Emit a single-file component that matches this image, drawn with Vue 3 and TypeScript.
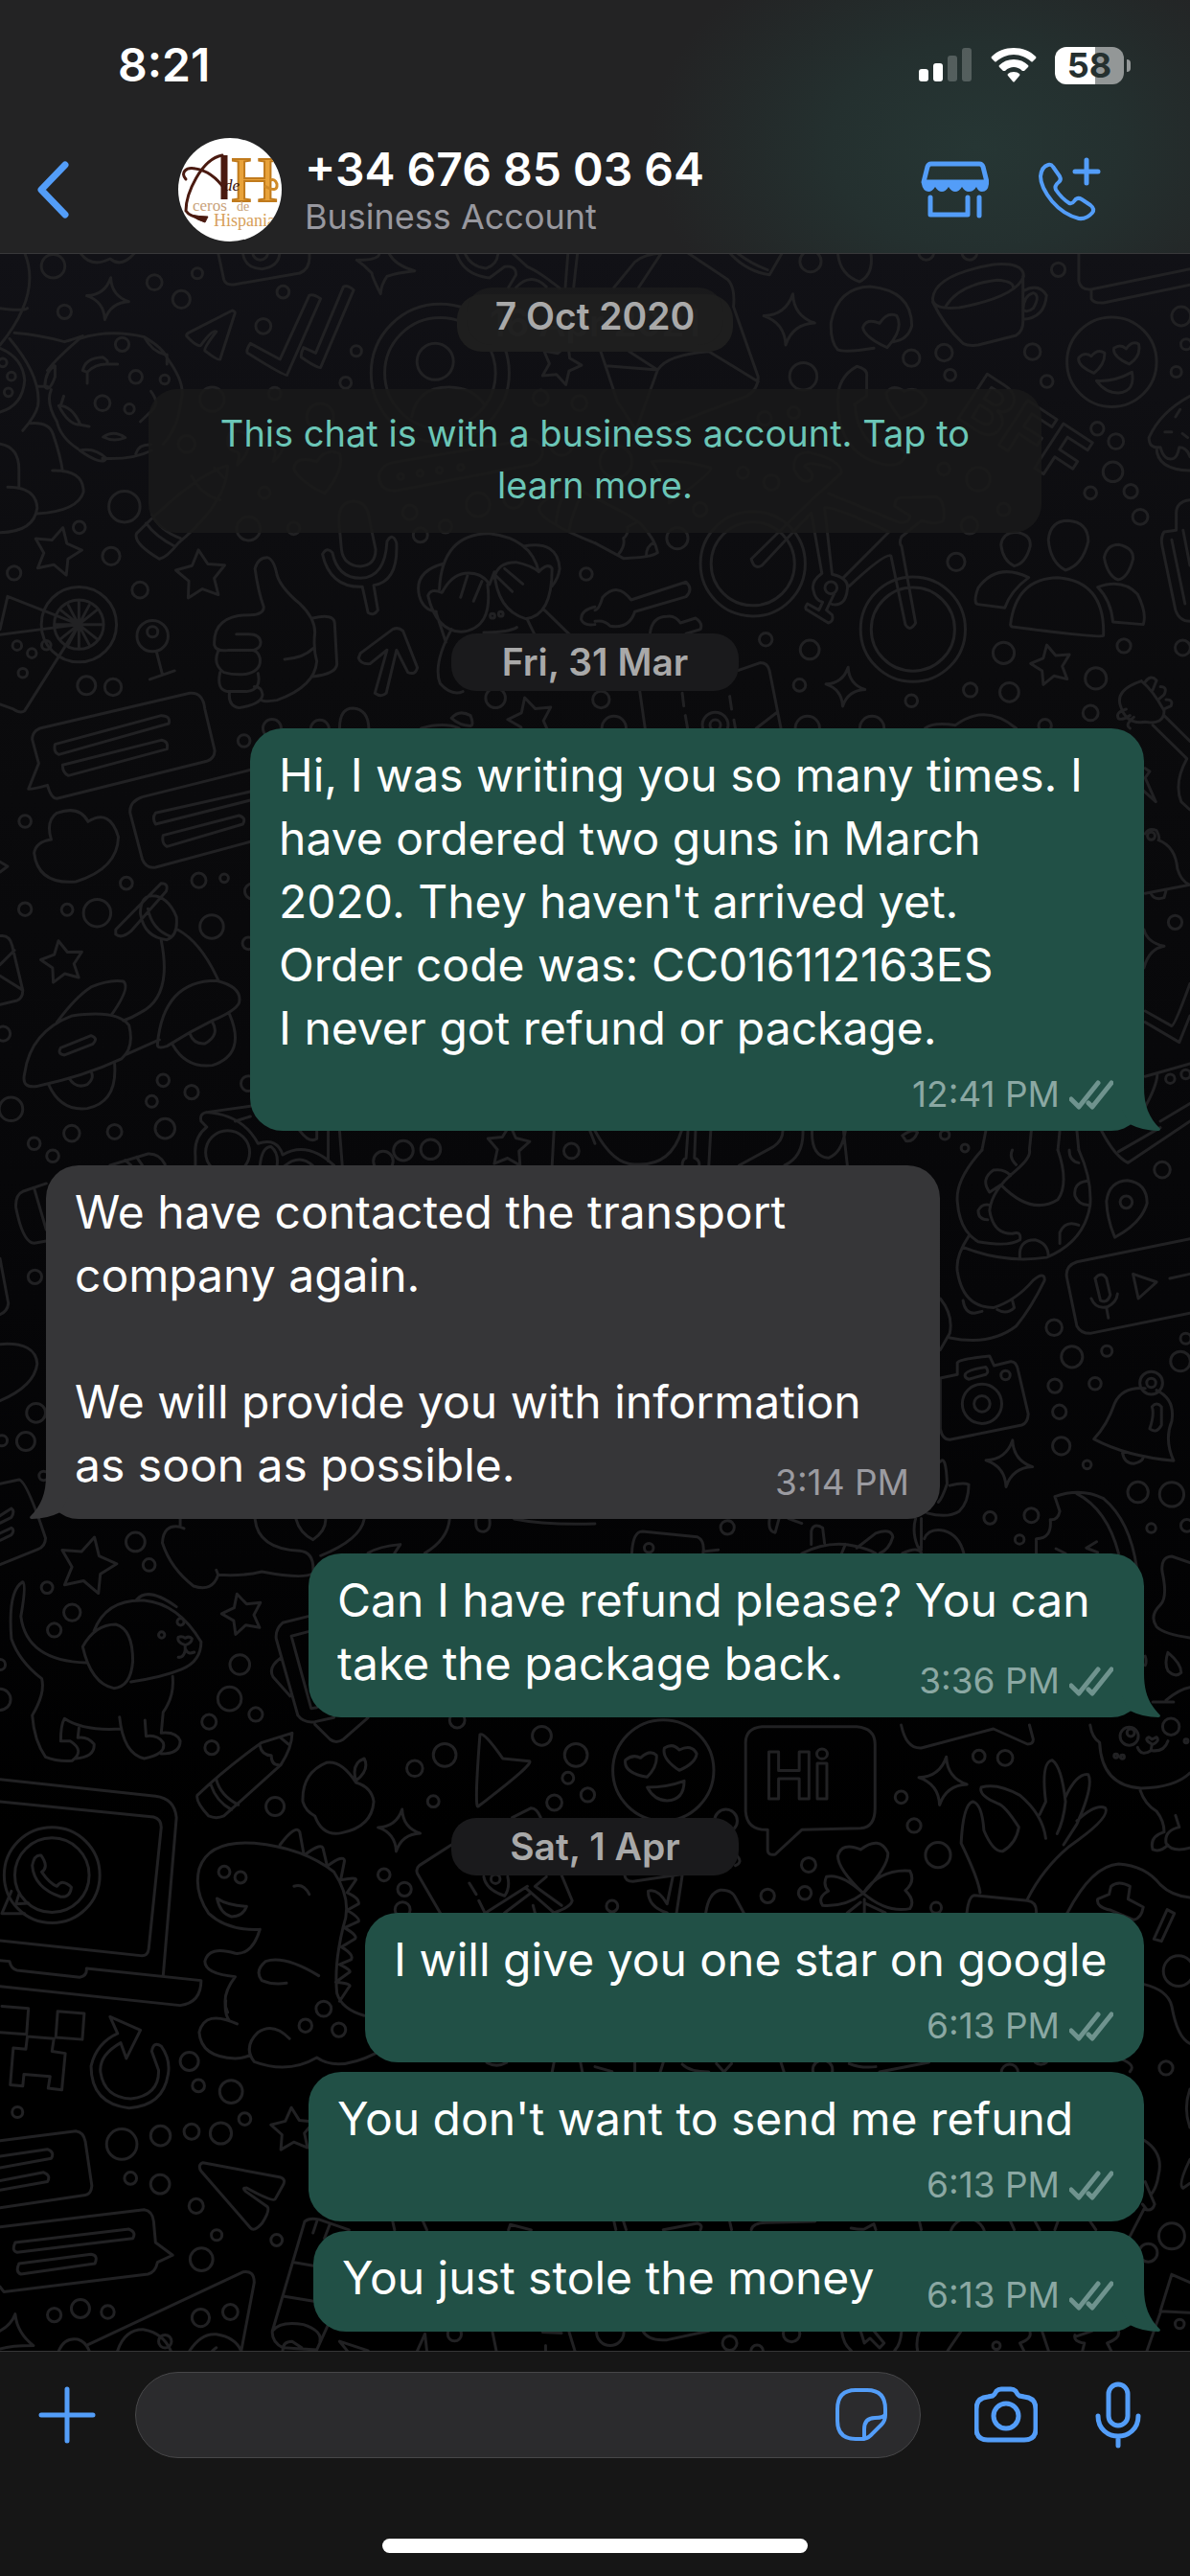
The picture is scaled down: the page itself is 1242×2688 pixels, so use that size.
<script setup lang="ts">
interface Message {
  text: string
  time: string
  mine: boolean
  width: number
  tail?: boolean
  stacked?: boolean
}

interface Section {
  day: string
  messages: Message[]
}

const sections: Section[] = [
  {
    day: 'Fri, 31 Mar',
    messages: [
      {
        text: "Hi, I was writing you so many times. I have ordered two guns in March\n2020. They haven't arrived yet.\nOrder code was: CC016112163ES\nI never got refund or package.",
        time: '12:41 PM', mine: true, width: 933, tail: true, stacked: true,
      },
      {
        text: 'We have contacted the transport company again.\n\nWe will provide you with information as soon as possible.',
        time: '3:14 PM', mine: false, width: 933, tail: true,
      },
      {
        text: 'Can I have refund please? You can take the package back.',
        time: '3:36 PM', mine: true, width: 872, tail: true,
      },
    ],
  },
  {
    day: 'Sat, 1 Apr',
    messages: [
      { text: 'I will give you one star on google', time: '6:13 PM', mine: true, width: 813, stacked: true },
      { text: "You don't want to send me refund", time: '6:13 PM', mine: true, width: 872, stacked: true },
      { text: 'You just stole the money', time: '6:13 PM', mine: true, width: 867, tail: true },
    ],
  },
]

/* Wallpaper doodles, grouped in patches that each have their own origin and scale. */
interface Patch {
  at: [number, number]
  sx: number
  sy: number
  dots: number[][]
  stars?: number[][]
  sparkles?: number[][]
  lines: string
}

const SX = 0.396
const SY = 0.3333

const patches: Patch[] = [
  {
    at: [0, 260], sx: SX, sy: SY,
    dots: [[140,53,31],[407,104,20],[520,76,14],[478,157,23],[170,196,18],[746,134,16],[694,241,20],[939,319,14],[911,418,15],[724,452,16],[844,525,35],[559,470,32],[492,610,22],[697,762,15],[328,806,41],[209,871,16],[293,961,23],[37,1014,18],[369,1067,21],[655,875,31],[774,874,16],[1108,895,19],[1080,824,19],[1174,868,17],[1260,800,31],[1425,465,20],[1527,482,20],[1480,610,30],[1353,780,26],[402,1211,41],[402,1198,14],[228,1366,24],[298,1371,22],[45,1241,12],[84,1265,12],[122,1240,12],[60,1327,12],[208,1175,99],[208,1175,65],[1306,1405,26],[1545,1017,16],[1160,388,182],[1160,388,146],[1147,352,48],[686,10,20],[7,355,11],[30,398,11],[22,448,11],[1056,712,8],[1107,702,8],[1158,692,8],[1214,683,8],[358,400,17],[434,408,12],[270,482,20],[341,500,13],[322,298,18],[1298,1148,6],[1320,1142,6]],
    stars: [[150,948,66],[530,1022,68],[1477,360,56],[1400,1475,62]],
    sparkles: [[284,155,56]],
    lines: 'M945 34Q1000 34 1000 12M1025 12Q1040 50 1093 68Q1040 75 1020 85Q1005 110 1003 140Q980 85 980 75Q960 50 940 34M612 192Q622 195 618 205L580 345Q575 350 540 318Q535 312 570 258Q560 250 530 300Q522 310 492 272Q490 265 500 260ZM660 295L738 345L815 145Q825 138 845 155L756 395Q752 400 652 325Q648 315 660 295ZM800 308L832 325L905 118Q915 110 932 128L845 370Q840 376 794 338Q792 328 800 308ZM893 850Q893 790 932 790Q970 790 974 850L990 940Q990 990 950 993Q905 990 900 940ZM850 955Q862 930 876 950Q890 1030 950 1030Q1015 1028 1020 915Q1035 885 1045 920Q1050 1040 985 1052L996 1130Q985 1150 970 1138L955 1057Q870 1060 850 955ZM672 1000Q680 965 704 965Q722 970 730 1020Q740 1060 790 1110Q830 1155 830 1200Q825 1250 835 1290Q830 1370 730 1412Q700 1418 690 1413M672 1000Q680 1070 695 1120Q695 1145 660 1145Q560 1145 565 1240Q570 1260 600 1256H665Q688 1250 687 1230Q685 1205 655 1205H623M575 1258Q560 1300 590 1325Q620 1335 650 1330Q690 1320 685 1280Q680 1260 670 1257M580 1325Q570 1380 600 1385H650Q690 1380 680 1328M605 1386Q600 1430 630 1436Q690 1425 692 1395Q690 1370 670 1370M750 1284Q800 1280 825 1250M824 1155Q880 1140 882 1170L888 1300Q885 1330 825 1338M950 1265L1035 1190Q1050 1182 1062 1195L1100 1310Q1095 1335 1075 1325L1045 1255L1018 1390Q1005 1405 988 1390L1020 1255L975 1298Q950 1300 945 1280ZM1158 1065Q1165 890 1290 890Q1400 905 1420 1010Q1445 980 1455 1000Q1455 1150 1385 1157Q1310 1130 1303 1010L1290 1050Q1270 1010 1225 1015Q1190 1020 1165 1075Q1135 1060 1128 1085Q1150 1195 1215 1198Q1300 1190 1285 1050M1303 1030Q1310 980 1360 980Q1400 990 1420 1010M1168 985Q1090 1010 1105 1085Q1115 1130 1150 1135M1380 930Q1470 910 1475 1000Q1472 1030 1455 1055M1330 1000L1378 1048M1305 1020L1350 1072M1232 1022L1214 1090M1270 1040L1248 1102M1190 1190Q1140 1300 1160 1360Q1190 1400 1220 1385M1435 1130L1500 1205M1150 1140L1175 1230M1390 1160L1408 1204M1275 1200Q1340 1200 1362 1184M125 380Q150 340 210 280Q290 250 380 275Q430 310 440 340Q490 420 478 470Q470 560 430 610M205 625Q160 590 150 540Q120 480 135 440M270 655Q350 660 400 630M440 330V360M380 275Q400 320 435 330M145 365Q120 380 118 430Q130 450 145 400ZM218 380Q225 340 270 338Q290 350 280 360Q250 360 230 385ZM280 360H310M230 385V420M155 490Q190 490 212 550Q180 550 155 490ZM212 550L235 555M168 460L160 490M210 630Q250 620 280 655Q270 680 210 630ZM272 588Q300 565 330 590Q300 605 272 588ZM358 640Q365 610 398 612M398 445Q420 480 405 500L370 540M65 12Q110 140 0 300M0 185Q60 195 72 185M38 262Q110 270 170 290Q200 280 218 272M25 280Q110 400 100 490Q95 520 60 568M100 430H125M0 310Q60 340 65 410Q60 490 0 510M80 545Q130 540 140 580Q160 650 165 695M138 693Q220 690 220 760Q205 820 98 828M0 610Q50 620 50 690V745M20 745Q95 745 98 810Q90 885 0 887M0 1190L20 1087L208 1175L0 1207M208 1175L65 1445Q55 1455 35 1440L0 1425M208 1100V1250M145 1175H272M160 1130L255 1220M160 1220L255 1130M180 1115L235 1238M235 1115L180 1238M412 1258L428 1332M395 1347L460 1320M600 678Q520 700 360 890Q350 920 420 970Q440 965 470 920Q600 790 600 678ZM385 858Q410 900 460 930M400 830Q420 880 475 905M505 710Q530 770 580 785M565 685L590 715M600 600Q600 570 625 570Q660 570 655 620Q650 650 625 675Q635 640 625 635Q600 630 600 600ZM695 590Q695 560 720 560Q755 560 750 610Q745 640 720 665Q730 630 720 625Q695 620 695 590ZM855 765Q780 720 775 685Q780 645 835 665Q860 620 895 640Q910 690 855 765ZM1085 525Q1100 430 1185 432Q1250 435 1275 485M1035 668L1400 595Q1430 600 1430 640Q1425 665 1400 675L1040 757Q1000 755 998 710Q1005 675 1035 668ZM575 12L590 95Q595 115 620 110L790 75Q820 60 815 12M640 12Q645 60 690 62Q735 55 737 12M212 12Q240 60 290 30Q320 60 355 12M1203 12Q1220 80 1290 90L1330 55Q1360 50 1360 80L1340 120M1225 12Q1240 55 1280 60Q1310 50 1313 12M1350 12L1390 55Q1420 70 1475 122M1360 120Q1400 70 1440 118M1497 12L1490 118M1522 12L1512 118M895 1500Q895 1437 930 1437Q970 1440 972 1500M1190 1468Q1210 1440 1240 1460Q1250 1490 1240 1493Q1210 1490 1190 1468M1110 1500Q1170 1480 1210 1500M1568 1120Q1530 1130 1532 1160Q1540 1180 1568 1175M1420 810Q1430 780 1510 740L1568 780M1420 810Q1420 850 1568 920M1465 860Q1470 800 1490 760M1500 880Q1510 820 1530 775',
  },
  {
    at: [621, 260], sx: SX, sy: SY,
    dots: [[549,398,36],[834,341,22],[920,324,22],[936,394,15],[1153,321,21],[1191,414,16],[1221,64,18],[1545,210,25],[1558,298,14],[1532,384,14],[1324,562,17],[1373,602,20],[1365,697,26],[1306,763,16],[1412,758,18],[1437,838,20],[217,905,28],[447,530,18],[524,512,15],[390,700,15],[465,730,20],[277,815,18],[919,688,16],[1010,720,31],[987,865,22],[1077,815,16],[952,979,23],[450,1222,17],[566,1254,25],[539,1365,16],[834,1414,16],[989,1380,18],[1092,1387,25],[1077,1264,28],[1394,1242,18],[1320,1344,28],[1306,1452,20],[1549,1248,20],[16,1410,22],[1186,1492,17],[1362,353,118],[416,985,138],[416,985,110],[838,1190,138],[838,1190,110],[622,1060,16],[568,38,28],[317,1490,34],[317,1490,14],[560,1500,32],[730,1500,32],[50,1500,32],[55,665,42],[873,10,20],[987,10,20]],
    stars: [[1203,1303,55]],
    sparkles: [[512,220,68],[660,1370,52]],
    lines: 'M50 120L105 40Q130 15 175 12L115 120M245 12L350 95Q370 120 365 180L430 400Q430 440 400 460L180 560M15 320L60 480L105 560M30 365L165 378L110 560M90 320L165 378Q190 330 300 320L430 415M355 12Q400 70 460 80L493 12M375 12Q410 45 455 65M640 12Q645 80 697 102Q735 80 727 12M640 315Q620 290 622 230Q640 120 725 117Q835 130 835 240Q825 285 785 290M640 315Q660 325 735 310M770 308Q710 275 706 245Q715 215 750 232Q770 195 795 208Q815 250 770 308ZM890 155Q895 80 1050 48Q1130 40 1130 85Q1110 150 960 183Q890 190 890 155ZM890 165Q920 240 970 295Q985 305 1010 300L1110 270Q1130 255 1128 220V85M925 178Q960 110 1060 97Q1100 100 1102 118M1130 130Q1170 105 1190 145Q1185 215 1128 220M1128 190Q1130 145 1155 137Q1175 145 1155 185Q1140 200 1128 190M1275 12V100Q1280 130 1310 125L1568 62M1308 128V155Q1315 170 1340 168L1568 112M1315 388Q1270 365 1275 340Q1290 320 1308 335Q1325 310 1343 325Q1345 360 1315 388ZM1408 360Q1362 335 1368 310Q1385 295 1400 312Q1415 285 1433 297Q1440 335 1408 360ZM1322 412Q1370 415 1415 385Q1425 445 1380 450Q1345 450 1322 412ZM1568 460Q1490 510 1460 590Q1460 625 1490 620Q1500 665 1525 655Q1535 650 1540 620Q1560 620 1568 650M1480 620Q1480 690 1568 693M1530 525L1542 502M1502 572H1520M1548 577L1562 590M640 470Q640 400 690 367Q720 375 716 400V460L685 485Q690 570 730 610Q780 590 820 640Q810 680 770 675Q640 650 640 470ZM805 530Q770 480 768 450Q785 420 815 445Q850 425 873 470Q870 505 805 530ZM1195 910Q1200 850 1247 850Q1300 855 1300 915Q1285 990 1240 1005Q1200 980 1195 910ZM1070 925Q1075 888 1108 886Q1150 892 1147 930Q1135 985 1105 992Q1075 975 1070 925ZM1342 965Q1350 925 1380 925Q1420 935 1418 970Q1405 1030 1378 1035Q1350 1020 1342 965ZM1095 1175Q1110 1030 1220 1028Q1345 1040 1340 1210Q1330 1218 1100 1182Q1095 1180 1095 1175ZM1143 1028Q1060 980 1010 1060Q995 1110 1010 1112L1080 1123Q1095 1070 1143 1028ZM1325 1058Q1390 1030 1430 1080Q1455 1140 1445 1175L1365 1167Q1360 1100 1325 1058ZM412 970L575 780L650 700Q650 660 560 635Q520 640 525 690Q545 740 570 722Q580 700 552 680Q560 660 620 685M412 970Q420 1005 440 990L570 825L598 1015M605 810L625 1018M605 810Q620 800 775 885L655 1028M615 765L800 855Q830 860 830 835L790 805Q790 775 810 778L900 775Q925 790 918 850Q900 865 860 850L808 900Q800 920 808 930L845 1170Q830 1200 818 1175L780 960Q765 950 670 1055M598 1015Q570 1040 575 1065Q580 1100 600 1105L590 1130L560 1110Q550 1125 560 1130L615 1170Q630 1165 625 1145L610 1130L630 1080M625 1018Q670 1030 665 1065Q660 1120 625 1112M0 1165Q25 1160 40 1180Q90 1190 105 1135L240 1088Q260 1065 240 1042L95 1098Q60 1040 20 1090Q10 1130 0 1130M145 1204Q150 1150 190 1150Q210 1145 225 1170L265 1155Q285 1170 278 1190L240 1204M1568 785Q1530 790 1532 830V880L1500 885Q1490 900 1495 930L1530 1130Q1540 1165 1568 1165M1520 910L1555 1110M1550 880L1568 990M375 1320L435 1295Q455 1295 460 1320L490 1500M118 1384L132 1500M230 1390L234 1430M238 1460L244 1500M355 1400L360 1440M366 1474L370 1500M425 1500L480 1450M1440 1352Q1370 1380 1385 1430Q1400 1490 1450 1480Q1500 1490 1500 1445Q1470 1380 1440 1352M1450 1355Q1465 1330 1480 1350L1470 1380M1490 1370Q1510 1370 1500 1395L1485 1410M1505 1410Q1525 1410 1518 1430L1500 1440M1400 1440Q1370 1450 1380 1470Q1390 1475 1410 1460M1420 1465Q1395 1490 1410 1500M150 665Q220 655 305 685Q310 700 195 795Q200 760 150 665M0 780Q90 830 120 860Q160 910 165 950Q150 965 75 968L0 920M62 955Q80 930 75 905Q90 890 85 870L110 855M135 960Q135 930 155 918',
  },
  {
    at: [0, 740], sx: SX, sy: SY,
    dots: [[643,99,16],[66,351,16],[333,545,16],[524,536,19],[591,529,11],[66,626,17],[177,628,15],[256,638,36],[558,681,31],[655,733,16],[665,570,20],[8,1016,19],[430,1162,16],[505,1199,18],[400,1228,15],[29,1252,31],[189,1328,21],[302,1323,19],[435,1313,26],[90,1360,16],[139,1399,16],[655,1172,20],[1506,1383,20],[600,1388,58],[717,60,24],[843,62,24],[1063,1382,26],[1135,1378,26],[1010,1415,26]],
    stars: [[165,793,58],[1340,1370,58]],
    lines: 'M105 60L500 -50Q535 -55 540 0L566 130Q565 155 545 163L150 280Q135 280 125 238Q90 250 75 250L102 170L85 95Q85 70 105 60ZM145 110L425 20Q450 20 445 45L155 142Q140 135 145 110ZM165 175L425 97Q445 100 440 125L180 208Q165 200 165 175ZM660 190L375 275Q340 290 343 325L375 470Q385 500 410 495L660 415M660 285L410 360Q400 340 410 325L660 258M430 395L630 333Q650 340 640 360L440 430Q425 420 430 395ZM135 408Q120 350 150 325Q210 300 232 352Q290 310 312 400Q310 500 200 540Q100 550 90 450Q95 415 135 408ZM305 690L425 545Q445 545 438 570L345 695Q320 720 305 705ZM370 640Q370 590 395 585Q440 580 465 650Q470 710 440 722Q380 715 370 640ZM390 625Q400 690 450 712M425 725Q455 900 370 950Q350 965 325 975M468 690Q530 730 575 848M415 1050Q430 850 570 850Q640 870 630 920Q620 945 560 975Q500 1010 440 1055Q415 1065 415 1050ZM605 955Q650 1080 560 1115Q490 1125 455 1050M500 1015Q510 1050 540 1047Q580 1020 560 980M150 980Q200 900 240 870Q290 845 325 852Q345 870 295 955M65 1140Q80 1010 190 960Q310 940 340 990Q355 1060 320 1095Q220 1150 100 1180Q55 1190 65 1140ZM160 1060L240 1022Q260 1030 245 1048L170 1083Q150 1080 160 1060ZM335 1080L420 1035M128 1175Q160 1260 230 1250Q310 1230 302 1110M182 1155Q200 1190 230 1175Q250 1155 240 1135M0 710Q25 705 32 740L60 880Q60 905 45 912L0 925M0 800L38 755M0 835L58 878M0 478L20 492L0 510M660 1243L545 1262Q525 1265 530 1290L545 1308Q510 1340 515 1400V1430M545 1262Q640 1270 680 1360Q730 1340 745 1395Q810 1350 880 1428M620 1290L660 1275M685 1430Q690 1370 715 1370Q735 1390 730 1430M750 1430Q790 1390 825 1430M865 1320V1415M895 1320L902 1428M790 1320Q815 1360 835 1345V1320M1460 1320L1455 1430M1555 1320L1568 1360M290 1428L390 1392Q420 1390 435 1425M330 1412L345 1428M360 1402L375 1428M122 1485L60 1510Q40 1520 42 1560Q60 1670 90 1672L122 1665M90 1500L122 1630',
  },
  {
    at: [621, 740], sx: SX, sy: SY,
    dots: [[1466,397,10],[1529,667,18],[1495,1442,21],[922,1333,12],[975,1374,10],[1516,1157,12],[1557,1143,12]],
    lines: 'M870 60Q890 40 950 50Q1030 -20 1110 60M1500 20L1568 100M1470 50L1560 155Q1525 230 1545 290L1568 315M1450 185L1462 195L1450 215L1478 290L1445 255M1450 390Q1460 370 1480 380Q1490 400 1485 410Q1530 430 1535 500Q1545 540 1568 550L1450 577M1465 577Q1475 600 1500 590L1505 568M1447 690Q1455 730 1500 742Q1460 750 1447 810M1450 945L1520 992Q1528 990 1568 860M1450 980L1540 1043L1568 960M1450 1150L1568 1110M1450 1245Q1480 1180 1482 1145M1490 1290L1568 1235M1335 1320Q1370 1400 1405 1420L1568 1290M1380 1385L1490 1310M0 1320Q50 1430 110 1425Q200 1430 228 1320M245 1320L240 1405Q230 1410 230 1428M265 1320L262 1405Q275 1410 275 1428M305 1320L300 1428M380 1428L470 1370Q495 1350 495 1320M500 1428Q550 1400 548 1320M572 1320Q570 1400 615 1405Q650 1390 660 1320M655 1320L665 1428M810 1335Q840 1310 850 1325Q840 1355 820 1352ZM1030 1320L1020 1380M1150 1320L1145 1380M1225 1320L1220 1380M1270 1320L1275 1380',
  },
  {
    at: [0, 1200], sx: SX, sy: SY,
    dots: [[92,397,18],[95,823,25],[68,912,24],[5,910,14],[115,1020,12],[357,1227,25],[393,1299,16],[124,1370,15],[190,1448,22]],
    stars: [[230,1302,78]],
    lines: 'M0 340L22 480Q20 505 0 515M0 608Q95 600 98 670Q90 740 0 785M0 1045L50 1032Q70 1035 120 1215Q120 1240 100 1250L0 1298M0 1145L30 1122Q40 1130 30 1150L0 1168M0 1200L30 1183Q40 1190 30 1205L0 1222M475 1155V1180Q430 1170 428 1230Q450 1310 510 1365Q560 1385 575 1330L570 1315M575 1330Q640 1335 690 1320Q800 1345 825 1325Q830 1260 790 1255Q680 1250 672 1155M475 1180L485 1185M845 1270Q950 1220 960 1155M1185 1155Q1180 1220 1120 1262M970 1262Q1000 1240 1055 1235L1040 1262M780 1155Q790 1200 825 1220Q860 1190 858 1155M1255 1155Q1250 1195 1275 1195Q1295 1190 1290 1155M1355 1155Q1440 1175 1568 1170',
  },
  {
    at: [0, 1600], sx: SX, sy: SY,
    dots: [[143,303,18],[632,411,26],[605,518,31],[674,567,18],[551,590,19],[558,671,18],[725,855,24],[1205,585,20],[1172,694,30],[1093,736,21],[1142,839,15],[1428,634,25],[1518,694,30],[1497,766,15],[1461,843,20],[1549,819,18],[1012,1069,16],[1066,1114,18],[1061,1178,20],[591,1060,15],[634,1077,15],[426,318,8],[476,277,9],[0,520,28],[0,411,14],[137,1070,126],[137,1070,98],[1306,1082,12]],
    stars: [[640,254,56]],
    sparkles: [[1052,930,56]],
    lines: 'M30 330Q20 180 60 152Q70 160 55 260Q70 400 228 405M30 330Q50 400 110 455Q120 500 85 570Q90 650 120 700Q150 715 190 712Q225 680 185 650H160Q160 600 170 580Q220 620 320 612M200 705Q250 700 248 660Q230 635 205 640L208 610M248 305Q280 205 380 210Q470 220 530 340Q530 400 480 425Q430 450 345 465M218 355Q250 285 305 285Q350 300 350 400Q345 480 300 485Q240 470 218 355ZM360 208Q390 165 465 230M455 448Q460 510 430 560L425 625M315 575Q325 690 380 705Q440 690 430 655Q415 630 385 635L382 585M425 690Q475 690 475 650Q465 620 425 625M488 350Q465 340 470 325Q480 320 488 328Q500 320 506 330Q505 345 488 350ZM488 350V365Q485 390 470 388M490 365Q495 380 512 372M812 260L745 280Q725 300 728 330L785 570Q800 595 830 590L880 577M812 308L768 322L820 548L835 545M740 390Q705 420 720 450L765 510M830 598L870 645Q885 660 905 645L970 577M770 625L690 655Q600 730 520 820Q515 840 550 885Q570 895 590 885L740 725Q770 670 770 625ZM685 665Q690 695 715 695Q715 725 735 725M740 640L760 660M570 770Q580 820 628 850M555 785Q570 840 610 865M938 780Q900 710 860 718Q795 750 798 840Q805 870 830 885Q850 950 900 938Q980 920 985 840Q980 795 938 780ZM938 775Q925 720 960 705Q975 740 938 775M1265 630Q1275 620 1325 705L1395 713Q1410 720 1260 855Q1250 860 1265 630ZM0 770L410 823Q460 830 465 890L430 1385M0 840L405 888Q425 895 425 920L392 1300Q390 1325 370 1322L0 1275M0 1337L25 1340Q30 1365 45 1368L210 1390Q230 1385 228 1362L530 1400Q530 1470 475 1478L0 1418M85 1040Q90 1005 108 1008Q130 1045 110 1060Q130 1095 150 1105Q165 1080 188 1108Q185 1140 160 1138Q90 1110 85 1040ZM30 1120L5 1190L65 1190M50 1130L42 1160L75 1158M685 1240Q600 1245 550 1190Q510 1120 525 1050Q550 960 670 970Q800 985 880 1060Q930 1150 905 1230Q880 1350 888 1440Q900 1490 960 1510M685 1240Q665 1320 620 1315Q550 1290 540 1340Q540 1380 620 1388Q580 1450 600 1500M738 975Q780 910 790 935L800 1000M805 1005Q850 965 852 990L862 1040M865 1040Q905 1005 908 1025L898 1085M900 1085Q940 1075 938 1085L915 1125Q950 1145 945 1160L915 1180Q950 1205 945 1215L908 1235Q945 1260 935 1270L900 1295Q935 1320 925 1335L895 1350Q930 1370 920 1375L885 1405Q930 1410 920 1420L895 1465M572 1143Q600 1165 650 1168Q640 1200 610 1200Q580 1190 572 1143ZM775 1105Q800 1095 815 1130M840 1385Q750 1320 700 1340Q670 1370 690 1400Q720 1415 755 1408M1190 975L1105 1040Q1095 1050 1100 1065L1160 1188M1350 890L1400 860Q1415 860 1425 890M1237 1095L1255 1130M1262 1150L1278 1188M1275 1075Q1280 1115 1330 1135Q1345 1110 1338 1075M1280 1188L1390 1105M1330 1188L1400 1125M1480 1070L1508 1150Q1505 1170 1460 1188L1385 1110M1440 1075L1410 1105L1480 1165M1405 1165L1410 1188',
  },
  {
    at: [621, 1800], sx: SX, sy: SY,
    dots: [[180,142,133],[807,226,16],[841,315,18],[904,407,33],[563,438,19],[455,535,18],[553,526,17],[899,572,14],[45,567,15],[1012,98,16],[1081,103,20],[1408,35,24],[1412,24,10],[1518,5,22],[345,300,30],[1538,770,40],[1505,1074,18],[600,1080,26],[1093,1088,22],[1373,97,5],[1390,100,5],[1558,50,5]],
    sparkles: [[917,175,64]],
    lines: 'M137 163Q75 150 80 110Q100 90 120 103Q145 75 162 95Q165 130 137 163ZM222 142Q175 105 183 72Q205 55 222 78Q255 58 268 90Q265 120 222 142ZM138 195Q190 195 235 175Q235 235 190 237Q155 235 138 195ZM440 5H690Q738 10 738 60V260Q738 320 700 323L545 328L475 405Q455 410 455 390V328Q400 330 397 270V60Q395 10 440 5ZM707 527Q640 450 640 410Q650 365 700 390Q750 345 772 400Q775 440 707 527ZM707 527Q650 465 610 475Q600 500 615 520Q585 540 600 565Q660 570 707 527ZM707 527Q750 450 830 457Q845 490 818 518Q845 550 830 575Q770 590 707 527M700 555L665 588M710 545V588M715 560L765 588M1015 525Q1010 480 965 370Q970 250 995 240Q1020 245 1025 330Q1050 400 1075 395Q1110 370 1117 320Q1080 250 1060 245Q1010 220 1018 195Q1060 180 1120 220Q1180 280 1188 355M1172 280L1188 240Q1175 115 1205 110Q1230 130 1240 240Q1235 300 1218 340M1240 225Q1270 150 1300 155Q1315 190 1270 310L1235 375M1270 300Q1320 245 1345 260Q1360 290 1250 380Q1180 450 1140 545M980 588Q985 535 1000 533L1140 550Q1165 555 1163 588M807 0Q820 75 860 72L1050 12L1140 60Q1155 60 1155 45L1145 0M1305 0Q1310 40 1330 55Q1335 190 1440 198Q1530 195 1568 150M1430 70Q1440 100 1465 80L1468 60Q1445 45 1460 38L1468 45L1480 38Q1490 50 1468 62M1468 80Q1500 85 1510 50M1437 205Q1450 250 1480 270Q1500 300 1500 335Q1460 350 1470 390Q1490 400 1510 375M1530 283L1540 320Q1500 330 1505 370Q1520 400 1568 385M1245 588Q1310 440 1380 435Q1450 440 1490 500Q1520 535 1568 540M1325 545L1355 530L1360 505Q1380 485 1410 505L1405 545L1445 570Q1440 605 1420 610L1390 595L1360 580Q1320 570 1325 545ZM1508 578L1527 590L1493 677L1473 670ZM1447 812Q1510 830 1520 880Q1535 980 1568 997M1568 1140Q1550 1200 1568 1260M1370 1040Q1430 1060 1410 1085M78 470Q80 490 100 490L240 465M205 475L190 560Q165 510 140 520Q140 570 190 588M230 470L215 588M292 588Q300 525 330 517Q360 515 370 540L392 588M375 410Q390 430 370 440M0 1070L45 1085M105 1056V1086M180 1056L172 1086M230 1062Q250 1086 300 1086M320 1060L340 1086L360 1060M490 1056L498 1086M670 1060Q700 1075 740 1070M750 1086L880 1056M1160 1056Q1175 1070 1190 1056',
  },
  {
    at: [0, 2000], sx: SX, sy: 0.4388,
    dots: [[853,219,20],[805,259,17],[893,269,18],[499,344,24],[523,402,16],[609,416,30],[645,481,16],[582,515,28],[505,511,20],[423,521,26],[46,465,14],[321,541,40],[344,622,16],[422,636,25],[517,688,19],[571,757,14],[729,769,15],[531,815,30],[143,947,18],[212,932,24],[284,940,17],[529,954,23],[607,940,20],[435,1010,17],[1198,993,18]],
    stars: [[772,508,60]],
    lines: 'M5 213L75 218L70 280L0 275M152 225L222 230L217 292L147 287ZM72 285L142 290L137 320L172 325L163 412L127 408L132 380L63 375L60 403L27 400L35 312L68 315ZM290 238L370 270L333 337L318 300Q260 330 265 370Q275 430 345 433Q420 425 418 365L400 320Q405 295 425 308Q450 340 443 375Q430 450 340 455Q240 445 240 355Q255 300 310 278ZM0 533L200 510Q220 512 225 535L242 640Q240 660 225 662L0 692M0 570L125 553Q145 560 135 575L0 597M0 628L115 608Q135 615 125 630L0 650M0 738L380 697Q402 700 405 725L410 775L455 805L415 822Q410 845 390 850L10 892L0 880M40 775L340 743Q360 750 350 765L45 798Q30 795 40 775ZM50 825L240 803Q260 805 250 825L55 850Q40 845 50 825ZM535 585L740 620Q755 625 745 640L725 672Q720 680 650 645Q635 645 650 655L705 690Q712 700 690 730Q670 750 660 740L530 605Q520 590 535 585ZM625 255Q540 220 525 275Q530 335 620 337Q645 337 660 328M763 290Q720 250 680 275Q640 310 670 345Q760 375 835 335Q890 370 990 325M595 200Q590 230 605 248M232 1018L640 845Q670 840 670 870L636 1032M155 1032Q170 1000 205 1005Q225 1010 235 1032M310 1032Q330 980 380 982Q430 990 450 1032M500 1032Q530 990 570 993Q620 1000 635 1032M560 1032L570 1025M803 725Q815 715 840 720L920 745M803 725L718 985Q715 1010 745 1025L835 1030L865 970M718 985Q740 960 800 970Q850 985 843 1010M775 822L826 830M750 903L850 918M835 725L825 752M870 730L855 765M745 1032Q745 1010 770 1010L795 1025M0 985Q30 970 40 945Q45 990 88 1020Q30 1020 0 1028M895 1010L915 1032M895 1010L970 1032M1100 1032L1120 992L1125 1032M1298 988L1308 1032M1500 988L1515 1032M1430 988L1480 990M1438 1032V1020M1035 725L1040 745M1115 725L1125 745M1340 745L1345 732L1400 745M1283 347Q1310 360 1335 347M1455 370L1460 347M1530 347L1535 370',
  },
  {
    at: [621, 2200], sx: SX, sy: SY,
    dots: [[982,400,46],[1520,400,34],[1458,452,24],[1541,675,12],[355,735,19],[518,705,22],[427,760,16],[1058,743,10],[40,700,36]],
    lines: 'M50 354L55 380M75 354L82 380M180 380L270 360Q285 365 278 380M355 354L360 380M412 380Q415 360 450 358L580 354M675 375Q700 380 710 378L735 362L740 380M855 354L860 380M1095 354L1105 380M1160 354L1172 380M1220 354L1212 380M1305 354L1320 380M1447 100Q1500 140 1485 210Q1480 250 1465 270M1450 230L1475 300Q1470 320 1455 318L1443 300M1447 315L1410 400M1568 160Q1535 240 1550 250L1568 235M1520 520L1568 545M1520 520L1490 635L1568 640M1490 640L1455 758M125 695Q140 730 190 725L300 697M650 697Q655 740 675 758M808 697Q805 740 790 758M700 697L710 735L725 720L750 750L762 735L735 697M855 697Q845 730 850 758M965 697L930 758M1145 695Q1155 720 1120 735L1130 758M1178 697L1195 758M1265 710Q1260 730 1290 735L1285 758M1265 715L1310 697M1380 697Q1385 720 1350 735L1360 758',
  },
  {
    at: [621, 1200], sx: SX, sy: 0.3827,
    dots: [[1400,142,16],[1210,484,21],[1257,564,28],[1349,548,14],[1212,643,18],[1318,637,16],[1224,714,18],[1229,807,23],[1297,858,11],[1557,514,14],[1543,576,26],[1431,933,27],[1520,939,32],[1041,1003,16],[1150,996,19],[1119,1062,12],[1466,1031,12],[1560,1024,16],[1020,692,52],[1020,692,21],[1082,614,12],[1466,635,30],[1466,635,12],[349,1029,18],[142,1085,12]],
    sparkles: [[1092,855,62]],
    lines: 'M1348 140Q1355 85 1403 83Q1455 90 1455 145Q1440 200 1370 238Q1350 190 1348 140ZM1568 242L1270 305Q1240 315 1243 345L1270 480Q1280 500 1305 500L1568 445M1318 350Q1335 330 1348 350L1358 395Q1350 420 1332 410ZM1308 405Q1320 435 1350 428Q1375 415 1377 392M1348 430L1353 458M1418 338L1480 360L1432 405ZM1515 350L1568 338M910 622L955 612V580Q960 570 1040 562L1052 588L1095 577Q1110 575 1115 600L1142 720Q1140 745 1125 750L935 790Q915 790 910 760ZM975 615Q975 600 1030 592Q1040 605 1030 612L985 625Q975 622 975 615ZM1315 788Q1350 750 1370 690Q1390 645 1450 650M1480 655Q1530 680 1520 740Q1500 790 1525 847Q1400 835 1315 788M1390 825Q1395 855 1420 855Q1445 850 1445 835M1468 700Q1480 685 1493 700V750Q1480 775 1462 760Q1475 720 1468 700ZM1020 0Q950 80 955 140Q960 220 1010 250Q1090 265 1120 245Q1125 220 1100 228Q1050 230 1040 165Q1045 110 1110 55Q1150 20 1145 0M1220 0Q1250 90 1220 135Q1150 180 1070 95M1275 0Q1310 80 1305 150Q1290 250 1190 293Q1080 310 970 265M985 235Q950 290 955 330Q970 430 1050 430Q1110 410 1155 355Q1185 330 1185 355Q1150 430 1110 480Q1040 535 935 512M970 410Q975 445 1000 445L1020 440M1060 435Q1085 450 1105 430L1100 410M1070 95L1040 115Q1015 80 1050 55Q1080 50 1095 70M1035 190Q1010 190 1010 165Q1020 145 1040 150M1295 85Q1260 90 1265 125Q1275 150 1300 150M1275 205Q1240 190 1225 225V255M1120 295Q1115 245 1160 245Q1195 255 1195 290M1110 40Q1090 20 1100 0M1275 35Q1250 30 1250 0M910 405Q945 450 935 500L910 545M1212 945Q1280 920 1340 950Q1410 1010 1428 1140M1270 937Q1350 980 1380 1100M1212 945L1225 985Q1220 1010 1200 1008Q1205 1060 1163 1060V1100M1215 1087L1240 1100M1322 1068L1295 1085L1325 1097M910 850Q925 830 928 910Q915 950 905 960M935 915Q970 905 985 912Q985 960 960 985Q930 1005 875 990M845 1005Q835 1040 850 1080L860 1090M860 1005V1085M868 1060Q880 1030 920 1038Q960 1050 972 1100M810 1100Q850 1080 860 1098M570 1075V1040Q575 1015 600 1030L605 1072M545 1100Q600 1070 660 1075Q720 1085 740 1100M660 1075L650 1100M690 1085L740 1045Q780 1030 785 1055Q775 1090 750 1100M97 1100Q100 1040 125 1040L270 1055Q290 1065 285 1100M285 1095L325 1090M460 1005Q455 1040 475 1043L485 1005M510 1005L545 1018M1568 1125L1520 1108Q1490 1110 1495 1150Q1510 1220 1490 1240Q1460 1270 1480 1300Q1500 1320 1568 1330M1510 1370Q1500 1400 1510 1420Q1530 1440 1545 1425Q1545 1400 1510 1370M1450 1380Q1455 1395 1450 1405M1470 1505L1525 1505M1505 1500Q1540 1470 1568 1465',
  },
]

const point = (cx: number, cy: number, r: number, deg: number) => {
  const a = (deg * Math.PI) / 180
  return `${(cx + r * Math.sin(a)).toFixed(1)} ${(cy - r * Math.cos(a)).toFixed(1)}`
}

function starPath(p: Patch, [x, y, r]: number[]): string {
  const cx = p.at[0] + x * p.sx
  const cy = p.at[1] + y * p.sy
  const turn = (x % 40) - 16
  const pts = Array.from({ length: 10 }, (_, i) =>
    point(cx, cy, r * p.sx * (i % 2 ? 0.52 : 1), turn + i * 36))
  return `M${pts.join('L')}Z`
}

function sparklePath(p: Patch, [x, y, r]: number[]): string {
  const cx = p.at[0] + x * p.sx
  const cy = p.at[1] + y * p.sy
  let d = `M${point(cx, cy, r * p.sx, 8)}`
  for (let i = 0; i < 4; i++) {
    d += `Q${point(cx, cy, r * p.sx * 0.22, 53 + i * 90)} ${point(cx, cy, r * p.sx, 98 + i * 90)}`
  }
  return d + 'Z'
}
</script>

<template>
  <div class="screen">
    <header class="top">
      <div class="status">
        <span class="clock">8:21</span>
        <div class="indicators">
          <svg width="56" height="36" viewBox="0 0 56 36" fill="#fff" aria-label="Signal">
            <rect x="0" y="22" width="10" height="13" rx="3" />
            <rect x="15" y="16" width="10" height="19" rx="3" />
            <rect x="30" y="8" width="10" height="27" rx="3" opacity=".22" />
            <rect x="45" y="0" width="10" height="35" rx="3" opacity=".22" />
          </svg>
          <svg width="48" height="36" viewBox="0 0 48 36" fill="#fff" aria-label="Wi-Fi">
            <path d="M24 0C33 0 41 3 47 9Q48 10 47 11L44 14Q43 15 42 14C37 10 31 7 24 7S11 10 6 14Q5 15 4 14L1 11Q0 10 1 9C7 3 15 0 24 0Z" />
            <path d="M24 12C30 12 35 14 39 18Q40 19 39 20L35 24Q34 24 33 24C30 21 27 20 24 20S18 21 15 24Q14 24 13 24L9 20Q8 19 9 18C13 14 18 12 24 12Z" />
            <path d="M24 25Q28 25 30 27Q31 28 30 29L25 35Q24 36 23 35L18 29Q17 28 18 27Q20 25 24 25Z" />
          </svg>
          <div class="battery"><span>58</span></div>
        </div>
      </div>
      <div class="bar">
        <button class="icon back" aria-label="Back">
          <svg width="36" height="60" viewBox="0 0 36 60"><path d="M30 4L5 30L30 56" stroke-width="7" /></svg>
        </button>
        <svg class="avatar" width="108" height="108" viewBox="0 0 108 108" role="img" aria-label="Aceros de Hispania">
          <clipPath id="face"><circle cx="54" cy="54" r="54" /></clipPath>
          <circle cx="54" cy="54" r="54" fill="#fff" />
          <g clip-path="url(#face)">
            <g fill="none" stroke="#4a1a10" stroke-linecap="round">
              <path d="M46 18C24 22 8 58 8 76Q12 82 24 84" stroke-width="3" />
              <path d="M8 43C2 36 8 30 18 32C32 34 42 44 49 54" stroke-width="3" />
              <path d="M13 80Q22 82 31 82L28 88Q20 86 13 80" fill="#4a1a10" />
              <path d="M48 18V64" stroke-width="7" stroke-linecap="butt" />
            </g>
            <text x="55" y="66" font-size="68" fill="#e8a23a" stroke="#c07a1c" stroke-width="2" class="serif">H</text>
            <path d="M90 50Q104 58 103 48Q101 42 96 44" fill="none" stroke="#d08a28" stroke-width="3" />
            <text x="48" y="55" font-size="17" font-style="italic" fill="#3b120c" class="serif">de</text>
            <text x="15" y="76" font-size="17" fill="#c9a27a" class="serif">ceros</text>
            <text x="61" y="76" font-size="14" fill="#c9a27a" class="serif">de</text>
            <text x="37" y="92" font-size="18" fill="#d7a05a" class="serif">Hispania</text>
          </g>
        </svg>
        <div class="who">
          <h1>+34 676 85 03 64</h1>
          <p>Business Account</p>
        </div>
        <button class="icon" aria-label="Catalogue">
          <svg width="72" height="66" viewBox="959 163 72 66">
            <path d="M971 169H1021Q1024 169 1025 172L1029 188H963L967 172Q968 169 971 169Z" stroke-width="5" />
            <path class="solid" d="M961 187H1031V190Q1030 198 1024 198Q1020 198 1018 193Q1015 198 1010 198Q1006 198 1003 193Q1000 198 996 198Q992 198 989 193Q986 198 982 198Q978 198 975 193Q972 198 968 198Q962 197 961 190Z" />
            <path d="M970 204V222H1009V204M1021 204V223" stroke-width="5" />
          </svg>
        </button>
        <button class="icon call" aria-label="New call">
          <svg width="68" height="68" viewBox="1082 162 68 68">
            <path d="M1094 170Q1097 169 1099 172L1106 182Q1108 186 1105 188Q1100 192 1102 196Q1108 205 1116 210Q1119 211 1121 208Q1124 203 1129 206L1138 212Q1143 216 1140 220Q1134 227 1126 226Q1110 222 1098 208Q1086 193 1086 182Q1087 172 1094 170Z" stroke-width="4" />
            <path d="M1134 165V189M1122 177H1146" stroke-width="5" />
          </svg>
        </button>
      </div>
    </header>

    <main class="chat">
      <svg class="wallpaper" viewBox="0 265 1242 2188" preserveAspectRatio="xMidYMin slice" aria-hidden="true">
        <g v-for="(p, i) in patches" :key="i">
          <path :d="p.lines" :transform="`translate(${p.at[0]} ${p.at[1]}) scale(${p.sx} ${p.sy})`" />
          <circle v-for="(c, j) in p.dots" :key="j" :cx="p.at[0] + c[0] * p.sx" :cy="p.at[1] + c[1] * p.sy" :r="c[2] * p.sx" />
          <path v-for="(s, j) in p.stars" :key="'s' + j" :d="starPath(p, s)" />
          <path v-for="(s, j) in p.sparkles" :key="'k' + j" :d="sparklePath(p, s)" />
        </g>
        <text x="798" y="1877" font-size="68">Hi</text>
        <text x="996" y="434" font-size="76" transform="rotate(33 996 434)">BFF</text>
      </svg>

      <div class="day first">
        <span class="ghost" aria-hidden="true">16 Apr 2021</span>
        <span class="pill">7 Oct 2020</span>
      </div>
      <button class="notice">This chat is with a business account. Tap to learn more.</button>

      <section v-for="s in sections" :key="s.day" class="section">
        <div class="day"><span class="pill">{{ s.day }}</span></div>
        <ol>
          <li v-for="(m, i) in s.messages" :key="i" :class="{ mine: m.mine, last: m.tail }">
            <article class="bubble" :class="{ stacked: m.stacked }" :style="{ maxWidth: m.width + 'px' }">
              <p class="text">{{ m.text }}</p>
              <footer class="meta">
                <time>{{ m.time }}</time>
                <svg v-if="m.mine" width="46" height="31" viewBox="0 0 46 31" aria-label="Delivered">
                  <path d="M2 20L10 28L30 3M20 24L24 28L44 3" />
                </svg>
              </footer>
              <svg v-if="m.tail" class="tail" width="40" height="46" viewBox="0 0 40 46" aria-hidden="true">
                <path d="M23 0C23 20 28 32 40 44Q40 46 38 46Q22 46 8 39L0 24V0Z" />
              </svg>
            </article>
          </li>
        </ol>
      </section>
    </main>

    <footer class="composer">
      <div class="tools">
        <button class="icon" aria-label="Attach">
          <svg width="60" height="60" viewBox="0 0 60 60"><path d="M30 3V57M3 30H57" stroke-width="5" /></svg>
        </button>
        <div class="field">
          <input type="text" aria-label="Message" />
          <button class="icon" aria-label="Stickers">
            <svg width="54" height="56" viewBox="0 0 54 56">
              <path d="M52 28V22Q52 2 33 2H21Q2 2 2 22V34Q2 53 21 53H27Q33 53 37 49L48 38Q52 34 52 28ZM30 53V43Q30 31 41 31Q51 31 52 27" stroke-width="4" />
            </svg>
          </button>
        </div>
        <button class="icon" aria-label="Camera">
          <svg width="66" height="60" viewBox="0 0 66 60">
            <path d="M19 10Q21 9 23 5Q25 3 28 3H38Q41 3 43 5Q45 9 47 10L52 11Q64 12 64 24V44Q64 56 52 56H14Q2 56 2 44V24Q2 12 14 11Z" stroke-width="5" />
            <circle cx="33" cy="31" r="13" stroke-width="5" />
          </svg>
        </button>
        <button class="icon mic" aria-label="Voice message">
          <svg width="48" height="70" viewBox="0 0 48 70">
            <rect x="14" y="3" width="20" height="43" rx="10" stroke-width="5" />
            <path d="M3 36C3 64 45 64 45 36M24 58V67" stroke-width="5" />
          </svg>
        </button>
      </div>
      <div class="home"></div>
    </footer>
  </div>
</template>

<style>
body {
  margin: 0;
  background: #000;
}
</style>

<style scoped>
.screen {
  display: flex;
  flex-direction: column;
  min-height: 100vh;
  overflow: hidden;
  font-family: Inter, "Liberation Sans", sans-serif;
  color: #fff;
}

h1, p, ol {
  margin: 0;
  padding: 0;
}

button {
  padding: 0;
  border: 0;
  background: none;
  font: inherit;
}

svg {
  display: block;
}

.icon {
  flex: none;
}

.icon svg {
  fill: none;
  stroke: #539df8;
  stroke-linecap: round;
  stroke-linejoin: round;
}

.icon .solid {
  fill: #539df8;
  stroke: none;
}

.serif {
  font-family: "Liberation Serif", serif;
}

.top {
  border-bottom: 1px solid #38383a;
  background: radial-gradient(ellipse 340px 240px at 82% 58%, #263634, #24302f 45%, #232324) #232324;
}

.status {
  display: flex;
  align-items: center;
  justify-content: space-between;
  height: 136px;
  padding: 0 62px 0 123px;
}

.clock {
  font-size: 48px;
  font-weight: 600;
  line-height: 60px;
}

.indicators {
  display: flex;
  align-items: center;
  gap: 19px;
}

.battery {
  position: relative;
  display: grid;
  place-items: center;
  width: 72px;
  height: 39px;
  margin-right: 7px;
  border-radius: 12px;
  background: linear-gradient(90deg, #fff 58%, #939797 58%);
  color: #25302f;
  font-size: 36px;
  font-weight: 700;
  line-height: 39px;
}

.battery::after {
  content: "";
  position: absolute;
  right: -7px;
  top: 13px;
  width: 4px;
  height: 13px;
  border-radius: 0 4px 4px 0;
  background: #939797;
}

.bar {
  display: flex;
  align-items: center;
  box-sizing: border-box;
  height: 128px;
  padding: 0 92px 4px 38px;
}

.back {
  margin-right: 112px;
}

.avatar {
  flex: none;
  margin-right: 24px;
}

.who {
  flex: 1;
}

.who h1 {
  font-size: 48px;
  font-weight: 600;
  line-height: 56px;
}

.who p {
  color: #98989f;
  font-size: 36px;
  line-height: 42px;
}

.call {
  margin-left: 50px;
}

.chat {
  position: relative;
  flex: 1;
  padding: 35px 48px 20px;
  background: linear-gradient(#111116, #0b0b0d 20%, #060608 50%, #000 75%);
}

.wallpaper {
  position: absolute;
  inset: 0;
  width: 100%;
  height: 100%;
  fill: none;
  stroke: #212123;
  stroke-width: 3px;
  stroke-linecap: round;
  stroke-linejoin: round;
  font-weight: 700;
}

.wallpaper path {
  vector-effect: non-scaling-stroke;
}

.day {
  position: relative;
  display: flex;
  justify-content: center;
}

.pill,
.ghost {
  box-sizing: border-box;
  min-width: 300px;
  height: 60px;
  border-radius: 26px;
  background: #1a1a1c;
  color: #a9a9a9;
  font-size: 39px;
  font-weight: 600;
  line-height: 60px;
  text-align: center;
}

.first .pill {
  position: relative;
  min-width: 268px;
  background: rgba(30, 30, 30, 0.7);
}

.ghost {
  position: absolute;
  top: 7px;
  min-width: 288px;
  background: #1e1e1e;
  color: #2a2a2a;
}

.notice {
  position: relative;
  display: block;
  width: 932px;
  max-width: 100%;
  margin: 46px auto 0;
  padding: 19px 40px 23px;
  border-radius: 30px;
  background: rgba(25, 25, 25, 0.88);
  color: #6bc6b7;
  font-size: 38px;
  line-height: 54px;
  text-align: center;
}

.section {
  position: relative;
  padding-top: 105px;
}

ol {
  display: flex;
  flex-direction: column;
  gap: 10px;
  margin-top: 39px;
  list-style: none;
}

li {
  display: flex;
  --bubble: #363638;
  --meta: #9b9ba1;
}

li.mine {
  justify-content: flex-end;
  --bubble: #215046;
  --meta: #8ba8a3;
}

li.last:not(:last-child) {
  margin-bottom: 26px;
}

.bubble {
  position: relative;
  display: grid;
  box-sizing: border-box;
  width: 100%;
  padding: 16px 32px 16px 30px;
  border-radius: 34px;
  background: var(--bubble);
}

.text {
  grid-area: 1 / 1;
  padding-bottom: 7px;
  font-size: 48px;
  line-height: 66px;
  white-space: pre-line;
}

.meta {
  display: flex;
  grid-area: 1 / 1;
  align-items: center;
  align-self: end;
  justify-self: end;
  gap: 10px;
  height: 44px;
  color: var(--meta);
  font-size: 37px;
  line-height: 44px;
}

.meta svg {
  fill: none;
  stroke: #6f938e;
  stroke-width: 5px;
  stroke-linecap: round;
  stroke-linejoin: round;
}

.stacked .text {
  padding-bottom: 14px;
}

.stacked .meta {
  grid-row: 2;
}

.tail {
  position: absolute;
  bottom: 0;
  left: -17px;
  fill: var(--bubble);
  transform: scaleX(-1);
}

.mine .tail {
  right: -17px;
  left: auto;
  transform: none;
}

.composer {
  border-top: 1px solid #363637;
  background: #161616;
}

.tools {
  display: flex;
  align-items: center;
  padding: 21px 51px 0 40px;
}

.field {
  display: flex;
  flex: 1;
  align-items: center;
  box-sizing: border-box;
  min-width: 0;
  height: 90px;
  margin: 0 56px 0 41px;
  padding: 0 34px 0 40px;
  border: 1px solid #474749;
  border-radius: 45px;
  background: #2b2b2d;
}

.field input {
  flex: 1;
  min-width: 0;
  border: 0;
  outline: 0;
  background: none;
  color: #fff;
  font: inherit;
  font-size: 48px;
}

.mic {
  margin-left: 60px;
}

.home {
  width: 444px;
  height: 15px;
  margin: 84px auto 24px;
  border-radius: 8px;
  background: #fff;
}
</style>
